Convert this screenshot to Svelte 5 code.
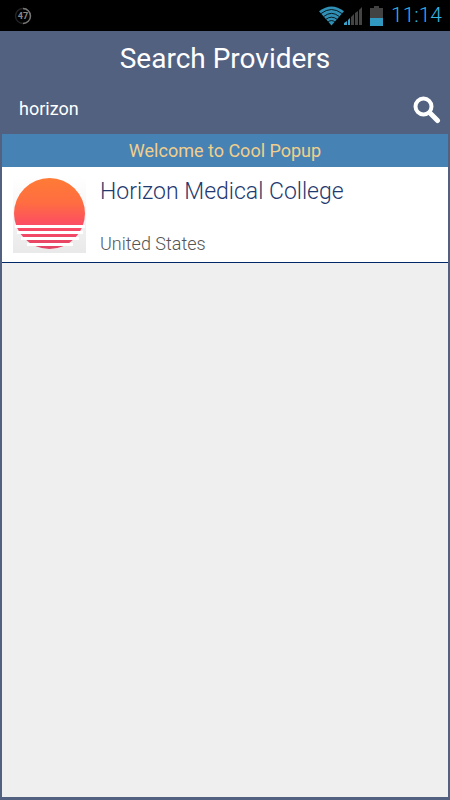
<script lang="ts">
  interface Provider {
    name: string;
    country: string;
  }

  let query = $state('horizon');

  const providers: Provider[] = [
    { name: 'Horizon Medical College', country: 'United States' }
  ];
</script>

<div class="screen">
  <div class="status-bar">
    <svg class="percent" viewBox="0 0 18 18" role="img" aria-label="47 percent">
      <circle cx="9" cy="9" r="7.5" fill="none" stroke="#222" stroke-width="1.4" />
      <path d="M9 1.5A7.5 7.5 0 0 1 9 16.5" fill="none" stroke="#777" stroke-width="1.4" />
      <text x="9" y="12" text-anchor="middle">47</text>
    </svg>
    <div class="indicators">
      <svg class="wifi" viewBox="0 0 26 20" aria-hidden="true">
        <path d="M0 5Q13 -5 26 5L13 20Z" fill="#2f8fb5" />
        <g fill="none" stroke="#06141a" stroke-width="1">
          <path d="M2 7.5Q13 -1 24 7.5" />
          <path d="M5 10.5Q13 4 21 10.5" />
          <path d="M7 13.5Q13 9 19 13.5" />
          <path d="M9 16.5Q13 13 17 16.5" />
        </g>
      </svg>
      <svg class="signal" viewBox="0 0 18 18" aria-hidden="true">
        <path d="M0 18V16L3 14V18ZM4 18V13L6 11V18Z" fill="#3aa0c8" />
        <path d="M7 18V10L10 7V18ZM11 18V6L14 4V18ZM15 18V3L18 0V18Z" fill="#444" />
      </svg>
      <svg class="battery" viewBox="0 0 13 20" aria-hidden="true">
        <path d="M0 2H4V0H9V2H13V12H0Z" fill="#424242" />
        <path d="M0 12H13V20H0Z" fill="#3198bf" />
      </svg>
      <time>11:14</time>
    </div>
  </div>

  <main>
    <h1>Search Providers</h1>

    <form class="search" onsubmit={(e) => e.preventDefault()}>
      <input type="text" aria-label="Search providers" bind:value={query} />
      <button type="submit" aria-label="Search">
        <svg viewBox="0 0 28 28" aria-hidden="true">
          <circle cx="10.5" cy="10.5" r="8" fill="none" stroke="#fff" stroke-width="4" />
          <path d="M17 17L24.5 24.5" stroke="#fff" stroke-width="5" stroke-linecap="round" />
        </svg>
      </button>
    </form>

    <p class="banner">Welcome to Cool Popup</p>

    <ul class="results">
      {#each providers as provider}
        <li>
          <svg class="logo" viewBox="0 0 73 76" aria-hidden="true">
            <defs>
              <linearGradient id="tile" x1="0" y1="0" x2="0" y2="1">
                <stop offset="0" stop-color="#fff" />
                <stop offset="1" stop-color="#e9e9e9" />
              </linearGradient>
              <linearGradient id="sun" x1="0" y1="0" x2="0" y2="1">
                <stop offset="0" stop-color="#ff7b35" />
                <stop offset="0.35" stop-color="#ff6d41" />
                <stop offset="0.68" stop-color="#fc4a66" />
                <stop offset="1" stop-color="#e04563" />
              </linearGradient>
              <clipPath id="stripes">
                <path d="M0 0H73V48H0ZM0 51H73V54H0ZM0 57H73V60H0ZM0 63H73V66H0ZM0 69H73V73H0Z" />
              </clipPath>
            </defs>
            <rect width="73" height="76" fill="url(#tile)" />
            <path d="M2 48H72V51H2ZM4 54H70V57H4ZM8 60H66V63H8ZM14 66H60V69H14Z" fill="#fff" />
            <circle cx="36.5" cy="36.5" r="35.5" fill="url(#sun)" clip-path="url(#stripes)" />
          </svg>
          <div class="details">
            <h2>{provider.name}</h2>
            <p>{provider.country}</p>
          </div>
        </li>
      {/each}
    </ul>
  </main>
</div>

<style>
  :global(body) {
    background: #52617f;
  }
  .screen {
    display: flex;
    flex-direction: column;
    min-height: 100vh;
    font-family: Roboto, 'Liberation Sans', sans-serif;
    background: #52617f;
  }
  h1,
  h2,
  p,
  ul {
    margin: 0;
    padding: 0;
    font-weight: 400;
  }
  .status-bar {
    display: flex;
    align-items: center;
    justify-content: space-between;
    height: 31px;
    padding: 0 8px 0 14px;
    background: #000;
  }
  .percent {
    width: 18px;
    height: 18px;
  }
  .percent text {
    font-size: 9px;
    font-weight: 700;
    fill: #888;
  }
  .indicators {
    display: flex;
    align-items: center;
  }
  .wifi {
    width: 25px;
    height: 20px;
  }
  .signal {
    width: 18px;
    height: 18px;
  }
  .battery {
    width: 13px;
    height: 20px;
    margin: 0 8px;
  }
  time {
    font-size: 21px;
    font-weight: 300;
    line-height: 31px;
    color: #33b5e5;
  }
  main {
    display: flex;
    flex: 1;
    flex-direction: column;
    padding: 0 2px 3px;
  }
  h1 {
    font-size: 28px;
    line-height: 56px;
    text-align: center;
    color: #fff;
  }
  .search {
    display: flex;
    align-items: center;
    height: 47px;
    padding: 0 7px 0 17px;
  }
  .search input {
    flex: 1;
    min-width: 0;
    padding: 0 0 4px;
    border: 0;
    outline: 0;
    background: transparent;
    font: inherit;
    font-size: 18px;
    color: #fff;
  }
  .search button {
    padding: 0 0 2px;
    border: 0;
    background: none;
    cursor: pointer;
  }
  .search svg {
    display: block;
    width: 28px;
    height: 28px;
  }
  .banner {
    font-size: 18px;
    line-height: 33px;
    text-align: center;
    color: #f1cf8c;
    background: #4682b4;
  }
  .results {
    flex: 1;
    list-style: none;
    background: #efefef;
  }
  .results li {
    display: flex;
    gap: 14px;
    padding: 10px 11px 9px;
    border-bottom: 1px solid #002868;
    background: #fff;
  }
  .logo {
    flex: none;
    width: 73px;
    height: 76px;
  }
  .details {
    display: flex;
    flex-direction: column;
    justify-content: space-between;
  }
  h2 {
    font-size: 23px;
    font-weight: 300;
    line-height: 30px;
    color: #1f3a70;
  }
  .details p {
    font-size: 18px;
    font-weight: 300;
    line-height: 18px;
    color: #555;
  }
</style>
